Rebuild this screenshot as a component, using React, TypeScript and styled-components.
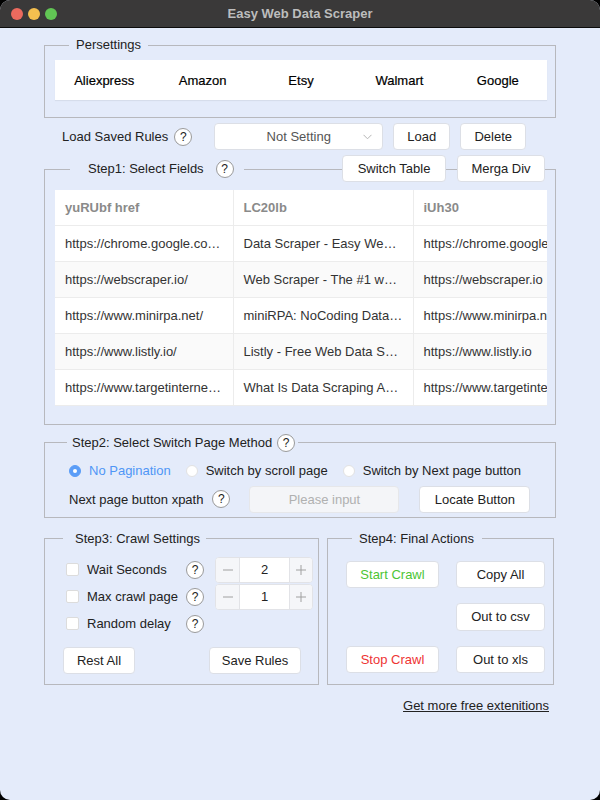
import styled, { createGlobalStyle, css } from "styled-components";

const GlobalStyle = createGlobalStyle`
  html, body {
    margin: 0;
    padding: 0;
    background: #000;
  }
  body {
    font-family: "Liberation Sans", Arial, sans-serif;
    font-size: 13px;
    color: #222;
  }
`;

const Window = styled.div`
  width: 600px;
  height: 800px;
  border-radius: 10px;
  overflow: hidden;
  background: #e4ebfa;
  display: flex;
  flex-direction: column;
`;

const TitleBar = styled.div`
  height: 28px;
  flex-shrink: 0;
  background: #3a3939;
  border-bottom: 1px solid #0c0c0c;
  box-sizing: border-box;
  display: flex;
  align-items: center;
  position: relative;
  padding-left: 6px;
`;

const Light = styled.span<{ $color: string }>`
  width: 12px;
  height: 12px;
  border-radius: 50%;
  background: ${(p) => p.$color};
  margin-left: 5px;
`;

const Title = styled.div`
  position: absolute;
  left: 0;
  right: 0;
  text-align: center;
  font-weight: bold;
  font-size: 13px;
  color: #bdbdbd;
  pointer-events: none;
`;

const Content = styled.div`
  padding: 0 44px;
  display: flex;
  flex-direction: column;
`;

const Fieldset = styled.fieldset<{ $mt: number; $pad: string; $w?: number }>`
  position: relative;
  margin: ${(p) => p.$mt}px 0 0 0;
  padding: ${(p) => p.$pad};
  width: ${(p) => (p.$w ? `${p.$w}px` : "auto")};
  border: 1px solid #b7b8bd;
  min-width: 0;
  box-sizing: border-box;
`;

const Legend = styled.legend<{ $ml: number; $pad: string }>`
  margin-left: ${(p) => p.$ml}px;
  padding: ${(p) => p.$pad};
  height: 20px;
  line-height: 20px;
  display: flex;
  align-items: center;
  color: #222;
  white-space: nowrap;
`;

const Help = styled.span<{ $ml?: number }>`
  display: inline-flex;
  align-items: center;
  justify-content: center;
  width: 18px;
  height: 18px;
  box-sizing: border-box;
  border: 1px solid #9a9a9a;
  border-radius: 50%;
  background: #fff;
  font-size: 12px;
  color: #222;
  margin-left: ${(p) => p.$ml ?? 0}px;
  flex-shrink: 0;
`;

const PresetBar = styled.div`
  display: grid;
  grid-template-columns: repeat(5, 1fr);
  height: 40px;
  background: #fff;
  box-shadow: 0 1px 1px rgba(0, 0, 0, 0.06);
`;

const PresetItem = styled.div`
  display: flex;
  align-items: center;
  justify-content: center;
  font-size: 13px;
  color: #000;
  -webkit-text-stroke: 0.2px #000;
`;

const Row = styled.div`
  display: flex;
  align-items: center;
`;

const LoadRow = styled(Row)`
  margin-top: 5px;
  padding-left: 18px;
  height: 27px;
`;

const Button = styled.button<{ $w?: number; $h?: number; $tone?: "green" | "red"; $ml?: number }>`
  height: ${(p) => p.$h ?? 27}px;
  width: ${(p) => (p.$w ? `${p.$w}px` : "auto")};
  padding: 0 10px;
  margin-left: ${(p) => p.$ml ?? 0}px;
  background: #fff;
  border: 1px solid #dcdfe6;
  border-radius: 4px;
  font-family: "Liberation Sans", Arial, sans-serif;
  font-size: 13px;
  color: #222;
  white-space: nowrap;
  flex-shrink: 0;
  ${(p) =>
    p.$tone === "green" &&
    css`
      color: #4cc534;
    `}
  ${(p) =>
    p.$tone === "red" &&
    css`
      color: #ee3434;
    `}
`;

const Select = styled.div`
  width: 169px;
  height: 27px;
  margin-left: 22px;
  box-sizing: border-box;
  background: #fff;
  border: 1px solid #dcdfe6;
  border-radius: 4px;
  display: flex;
  align-items: center;
  justify-content: center;
  position: relative;
  color: #555;
`;

const Chevron = styled.svg`
  position: absolute;
  right: 10px;
  top: 10px;
`;

const HeaderActions = styled.div`
  position: absolute;
  top: -24px;
  right: 10px;
  display: flex;
  gap: 11px;
`;

const TableWrap = styled.div`
  overflow: hidden;
  background: #fff;
`;

const Table = styled.table`
  border-collapse: collapse;
  table-layout: fixed;
  width: 540px;
`;

const Th = styled.th<{ $w: number }>`
  width: ${(p) => p.$w}px;
  height: 35px;
  padding: 0 10px;
  text-align: left;
  font-weight: bold;
  color: #8a8a8a;
  border-right: 1px solid #ececec;
  border-bottom: 1px solid #ececec;
  box-sizing: border-box;
`;

const Tr = styled.tr<{ $alt: boolean }>`
  background: ${(p) => (p.$alt ? "#fafafa" : "#fff")};
`;

const Td = styled.td<{ $clip?: boolean }>`
  height: 36px;
  padding: 0 10px;
  color: #333;
  white-space: nowrap;
  overflow: hidden;
  text-overflow: ${(p) => (p.$clip ? "clip" : "ellipsis")};
  border-right: 1px solid #ececec;
  border-bottom: 1px solid #ececec;
  box-sizing: border-box;
`;

const RadioRow = styled(Row)`
  height: 20px;
  gap: 15px;
`;

const RadioItem = styled.label<{ $on?: boolean }>`
  display: flex;
  align-items: center;
  gap: 8px;
  color: ${(p) => (p.$on ? "#4f96f6" : "#222")};
`;

const RadioDot = styled.span<{ $on?: boolean }>`
  width: 12px;
  height: 12px;
  box-sizing: border-box;
  border-radius: 50%;
  background: ${(p) => (p.$on ? "#5b9df7" : "#fff")};
  border: 1px solid ${(p) => (p.$on ? "#5b9df7" : "#e2e2e2")};
  display: flex;
  align-items: center;
  justify-content: center;
  &::after {
    content: "";
    width: 4px;
    height: 4px;
    border-radius: 50%;
    background: #fff;
    display: ${(p) => (p.$on ? "block" : "none")};
  }
`;

const XpathRow = styled(Row)`
  margin-top: 5px;
  height: 27px;
`;

const TextInput = styled.div`
  width: 150px;
  height: 27px;
  margin-left: 19px;
  box-sizing: border-box;
  background: #f4f5f8;
  border: 1px solid #e6e7ea;
  border-radius: 4px;
  display: flex;
  align-items: center;
  justify-content: center;
  color: #b0b0b0;
`;

const BottomRow = styled.div`
  display: flex;
  gap: 8px;
  margin-top: 11px;
`;

const SettingsGrid = styled.div`
  display: grid;
  grid-template-columns: 120px 29px 98px;
  grid-auto-rows: 26px;
  row-gap: 1px;
  padding-left: 3px;
  align-items: center;
`;

const CheckLabel = styled.label`
  display: flex;
  align-items: center;
  gap: 8px;
  color: #222;
`;

const CheckBox = styled.span`
  width: 13px;
  height: 13px;
  box-sizing: border-box;
  border: 1px solid #dcdcdc;
  border-radius: 2px;
  background: #fff;
`;

const Stepper = styled.div`
  display: grid;
  grid-template-columns: 24px 1fr 23px;
  height: 26px;
  box-sizing: border-box;
  border: 1px solid #e2e3e7;
  border-radius: 4px;
  overflow: hidden;
  background: #fff;
`;

const StepBtn = styled.span<{ $side: "l" | "r" }>`
  display: flex;
  align-items: center;
  justify-content: center;
  background: #f5f6f9;
  ${(p) => (p.$side === "l" ? "border-right" : "border-left")}: 1px solid #e2e3e7;
`;

const StepValue = styled.span`
  display: flex;
  align-items: center;
  justify-content: center;
  color: #222;
`;

const ButtonRow = styled.div`
  display: flex;
  justify-content: space-between;
  margin-top: 10px;
  padding-right: 11px;
`;

const ActionGrid = styled.div`
  display: grid;
  grid-template-columns: 93px 89px;
  grid-template-rows: 27px 28px 27px;
  column-gap: 17px;
  row-gap: 15px;
`;

const FooterLink = styled.a`
  align-self: flex-end;
  margin: 13px 7px 0 0;
  color: #222;
  text-decoration: underline;
  font-size: 13px;
`;

const rows = [
  ["https://chrome.google.com/webstore", "Data Scraper - Easy Web Scraping", "https://chrome.google.com"],
  ["https://webscraper.io/", "Web Scraper - The #1 web scraping", "https://webscraper.io"],
  ["https://www.minirpa.net/", "miniRPA: NoCoding Data Scraper", "https://www.minirpa.net"],
  ["https://www.listly.io/", "Listly - Free Web Data Scraper", "https://www.listly.io"],
  ["https://www.targetinternet.com/", "What Is Data Scraping And How", "https://www.targetinternet.com"],
];

const presets = ["Aliexpress", "Amazon", "Etsy", "Walmart", "Google"];

const Minus = () => (
  <svg width="12" height="12" viewBox="0 0 12 12">
    <path d="M1 6h10" stroke="#a0a0a0" strokeWidth="1" />
  </svg>
);

const Plus = () => (
  <svg width="12" height="12" viewBox="0 0 12 12">
    <path d="M1 6h10M6 1v10" stroke="#a0a0a0" strokeWidth="1" />
  </svg>
);

const App = () => {
  return (
    <Window>
      <GlobalStyle />
      <TitleBar>
        <Light $color="#ec6a5e" />
        <Light $color="#f4bf4f" />
        <Light $color="#61c554" />
        <Title>Easy Web Data Scraper</Title>
      </TitleBar>
      <Content>
        <Fieldset $mt={7} $pad="5px 8px 17px 10px">
          <Legend $ml={14} $pad="0 7px">
            Persettings
          </Legend>
          <PresetBar>
            {presets.map((p) => (
              <PresetItem key={p}>{p}</PresetItem>
            ))}
          </PresetBar>
        </Fieldset>

        <LoadRow>
          Load Saved Rules
          <Help $ml={6}>?</Help>
          <Select>
            Not Setting
            <Chevron width="9" height="6" viewBox="0 0 9 6">
              <path d="M0.5 0.8L4.5 4.8L8.5 0.8" fill="none" stroke="#b5b5b5" strokeWidth="1" />
            </Chevron>
          </Select>
          <Button $w={57} $ml={10}>
            Load
          </Button>
          <Button $w={66} $ml={10}>
            Delete
          </Button>
        </LoadRow>

        <Fieldset $mt={9} $pad="11px 8px 18px 10px">
          <Legend $ml={15} $pad="0 10px 0 18px">
            Step1: Select Fields
            <Help $ml={12}>?</Help>
          </Legend>
          <HeaderActions>
            <Button $w={104}>Switch Table</Button>
            <Button $w={88}>Merga Div</Button>
          </HeaderActions>
          <TableWrap>
            <Table>
              <thead>
                <tr>
                  <Th $w={178}>yuRUbf href</Th>
                  <Th $w={180}>LC20lb</Th>
                  <Th $w={182}>iUh30</Th>
                </tr>
              </thead>
              <tbody>
                {rows.map((r, i) => (
                  <Tr key={i} $alt={i % 2 === 1}>
                    <Td>{r[0]}</Td>
                    <Td>{r[1]}</Td>
                    <Td $clip>{r[2]}</Td>
                  </Tr>
                ))}
              </tbody>
            </Table>
          </TableWrap>
        </Fieldset>

        <Fieldset $mt={8} $pad="8px 20px 4px 24px">
          <Legend $ml={-2} $pad="0 3px 0 5px">
            Step2: Select Switch Page Method
            <Help $ml={5}>?</Help>
          </Legend>
          <RadioRow>
            <RadioItem $on>
              <RadioDot $on />
              No Pagination
            </RadioItem>
            <RadioItem>
              <RadioDot />
              Switch by scroll page
            </RadioItem>
            <RadioItem>
              <RadioDot />
              Switch by Next page button
            </RadioItem>
          </RadioRow>
          <XpathRow>
            Next page button xpath
            <Help $ml={9}>?</Help>
            <TextInput>Please input</TextInput>
            <Button $w={111} $ml={20}>
              Locate Button
            </Button>
          </XpathRow>
        </Fieldset>

        <BottomRow>
          <Fieldset $mt={0} $pad="8px 6px 10px 18px" $w={275}>
            <Legend $ml={0} $pad="0 6px 0 12px">
              Step3: Crawl Settings
            </Legend>
            <SettingsGrid>
              <CheckLabel>
                <CheckBox />
                Wait Seconds
              </CheckLabel>
              <Help>?</Help>
              <Stepper>
                <StepBtn $side="l">
                  <Minus />
                </StepBtn>
                <StepValue>2</StepValue>
                <StepBtn $side="r">
                  <Plus />
                </StepBtn>
              </Stepper>
              <CheckLabel>
                <CheckBox />
                Max crawl page
              </CheckLabel>
              <Help>?</Help>
              <Stepper>
                <StepBtn $side="l">
                  <Minus />
                </StepBtn>
                <StepValue>1</StepValue>
                <StepBtn $side="r">
                  <Plus />
                </StepBtn>
              </Stepper>
              <CheckLabel>
                <CheckBox />
                Random delay
              </CheckLabel>
              <Help>?</Help>
            </SettingsGrid>
            <ButtonRow>
              <Button $w={72}>Rest All</Button>
              <Button $w={92}>Save Rules</Button>
            </ButtonRow>
          </Fieldset>

          <Fieldset $mt={0} $pad="12px 8px 10px 18px" $w={227}>
            <Legend $ml={6} $pad="0 8px 0 7px">
              Step4: Final Actions
            </Legend>
            <ActionGrid>
              <Button $tone="green">Start Crawl</Button>
              <Button>Copy All</Button>
              <span />
              <Button $h={28}>Out to csv</Button>
              <Button $tone="red">Stop Crawl</Button>
              <Button>Out to xls</Button>
            </ActionGrid>
          </Fieldset>
        </BottomRow>

        <FooterLink href="#">Get more free extenitions</FooterLink>
      </Content>
    </Window>
  );
};

export default App;
